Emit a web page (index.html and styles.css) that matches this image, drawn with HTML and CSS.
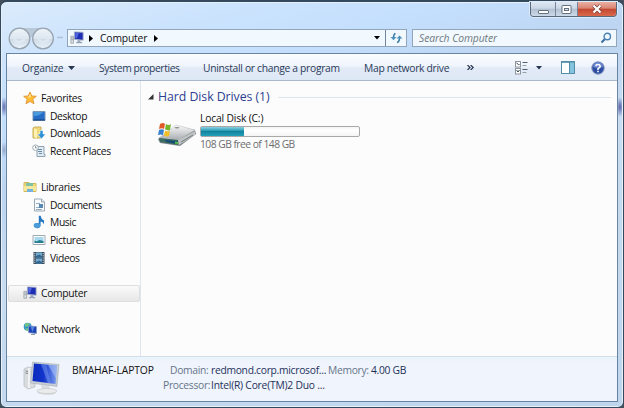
FILE: index.html
```html
<!DOCTYPE html>
<html lang="en">
<head>
  <meta charset="UTF-8" />
  <meta name="viewport" content="width=device-width, initial-scale=1" />
  <title>Computer</title>
  <link rel="stylesheet" href="styles.css">
</head>

<body>

  <!-- Shared icons -->
  <svg class="defs" width="0" height="0">
    <symbol id="icon-pc" viewBox="0 0 16 16">
      <path d="M1 6h3v8H1z" fill="#dfe3e6" stroke="#8d969d" stroke-width=".8" />
      <path d="M1.5 8h2M1.5 10h2" stroke="#68757d" stroke-width=".6" />
      <path d="M5 1l10 .5v9L5 9.500z" fill="#1c2fb4" stroke="#a9b2c5" />
      <path d="M6 2l4 .3-2 6-2-.2z" fill="#5165df" />
      <path d="M8.500 10.500h3.500v2h2V14H7v-1.500h1.500z" fill="#98a4b8" />
    </symbol>
    <linearGradient id="screen" x1="0" y1="0" x2="1" y2="0">
      <stop offset="0" stop-color="#0a2bbc" />
      <stop offset=".45" stop-color="#1334cb" />
      <stop offset="1" stop-color="#7ca0f0" />
    </linearGradient>
    <linearGradient id="metal" x1="0" y1="0" x2="0" y2="1">
      <stop offset="0" stop-color="#fafafa" />
      <stop offset="1" stop-color="#a9adb0" />
    </linearGradient>
  </svg>

  <div class="window">

    <!-- Title bar -->
    <header class="titlebar">
      <div class="controls">
        <span class="control minimize">
          <svg width="11" height="9" viewBox="0 0 11 9"><rect x=".5" y="5.500" width="10" height="3" rx=".5" fill="#fff" stroke="#63707f" /></svg>
        </span>
        <span class="control">
          <svg width="11" height="9" viewBox="0 0 11 9"><rect x="1" y=".5" width="9" height="8" rx=".5" fill="#fff" stroke="#63707f" /><rect x="3.500" y="3.500" width="4" height="2" fill="#dce6f1" stroke="#63707f" /></svg>
        </span>
        <span class="control close">
          <svg width="12" height="10" viewBox="0 0 12 10"><path d="M2.500 1.500l7 7M9.500 1.500l-7 7" stroke="#7d3c38" stroke-width="3.800" /><path d="M2.500 1.500l7 7M9.500 1.500l-7 7" stroke="#fff" stroke-width="2.300" /></svg>
        </span>
      </div>
    </header>

    <!-- Address and search -->
    <div class="navbar">
      <svg class="travel" width="57" height="24" viewBox="0 0 57 24">
        <defs>
          <linearGradient id="orb" x1="0" y1="0" x2="0" y2="1">
            <stop offset="0" stop-color="#eef4f9" />
            <stop offset=".5" stop-color="#dde7f0" />
            <stop offset=".55" stop-color="#cfdbe6" />
            <stop offset="1" stop-color="#e9f3fb" />
          </linearGradient>
        </defs>
        <path d="M11 1h24q-8 3-12 10Q19 4 11 1z" fill="#b9c9d8" />
        <circle cx="11.500" cy="11.500" r="10.300" fill="url(#orb)" stroke="#97a3af" stroke-width="1.300" />
        <circle cx="35" cy="11.500" r="10.300" fill="url(#orb)" stroke="#97a3af" stroke-width="1.300" />
        <path d="M6 12.500l5 3 6-3M30 12.500l5 3 6-3" fill="none" stroke="#dfe9f1" stroke-width="2" />
        <path d="M49 10.500h6" fill="none" stroke="#afc1d2" stroke-width="1.500" />
      </svg>
      <div class="address">
        <svg width="14" height="14"><use href="#icon-pc" /></svg>
        <svg class="crumb" width="4" height="7" viewBox="0 0 4 7"><path d="M0 0l4 3.500L0 7z" /></svg>
        <span class="place">Computer</span>
        <svg class="crumb" width="4" height="7" viewBox="0 0 4 7"><path d="M0 0l4 3.500L0 7z" /></svg>
        <svg class="history" width="6" height="4" viewBox="0 0 6 4"><path d="M0 0h6L3 3.500z" /></svg>
        <span class="refresh">
          <svg width="13" height="12" viewBox="0 0 13 12" fill="none" stroke="#3c80a8" stroke-width="1.600">
            <path d="M5.500 1.500Q3.500 2 3.500 6" /><path d="M7 10.500q2.500-.5 2.500-5" />
            <path d="M.5 5h6L3.500 8.200z M6.500 6.500h6L9.500 3.500z" fill="#4a91bb" stroke="none" />
          </svg>
        </span>
      </div>
      <div class="search">
        <span>Search Computer</span>
        <svg width="12" height="12" viewBox="0 0 12 12" fill="none">
          <path d="M5.200 6.800L1.500 10.500" stroke="#3d6f9c" stroke-width="2" />
          <circle cx="7.300" cy="4.500" r="3.200" fill="#eef8ff" stroke="#4c83b4" stroke-width="1.400" />
        </svg>
      </div>
    </div>

    <div class="client">

      <!-- Command bar -->
      <div class="toolbar">
        <span class="organize">Organize <svg width="7" height="4" viewBox="0 0 7 4"><path d="M0 0h7L3.500 4z" fill="#253650" /></svg></span>
        <span class="properties">System properties</span>
        <span class="uninstall">Uninstall or change a program</span>
        <span class="map">Map network drive</span>
        <svg class="more" width="7" height="5" viewBox="0 0 7 5" fill="none" stroke="#253650" stroke-width="1.200"><path d="M.5 0L3 2.500.5 5M3.700 0l2.500 2.500L3.700 5" /></svg>
        <svg class="view" width="15" height="14" viewBox="0 0 15 14">
          <rect x="1.500" y=".5" width="5" height="5.500" fill="#fff" stroke="#8c959d" />
          <rect x="1.500" y="7.500" width="5" height="5.500" fill="#fff" stroke="#8c959d" />
          <path d="M2.500 2l2 1.500h1M2.500 9l1.500 2 1.500-2" fill="none" stroke="#34424d" />
          <path d="M8.500 1.500h5M8.500 8.500h5" stroke="#4e6170" /><path d="M8.500 4.500h4M8.500 11.500h4" stroke="#93a0ab" />
        </svg>
        <svg class="view-arrow" width="6" height="4" viewBox="0 0 6 4"><path d="M0 0h6L3 3.500z" fill="#253650" /></svg>
        <svg class="preview" width="14" height="13" viewBox="0 0 14 13">
          <rect x=".5" y=".5" width="13" height="12" fill="#fff" stroke="#548da7" />
          <path d="M9 1h4v11H9z" fill="#83c4de" /><path d="M1 1.500h12" stroke="#6ba2b9" /><path d="M8.500 1v11" stroke="#548da7" />
        </svg>
        <svg class="help" width="14" height="14" viewBox="0 0 14 14">
          <circle cx="7" cy="7" r="6.200" fill="#2d4da3" stroke="#8997bf" />
          <path d="M2 6a5 5 0 0 1 10 0Q7 8 2 6z" fill="#6a87cc" />
          <path d="M4.800 5.200Q5 3.500 7 3.500t2.200 1.700Q9.200 6.500 7 7.600V9" fill="none" stroke="#fff" stroke-width="1.500" /><path d="M6.200 9.800h1.600v1.500H6.200z" fill="#fff" />
        </svg>
      </div>

      <div class="main">

        <!-- Navigation pane -->
        <nav class="sidebar">
          <div class="group">
            <div class="item head">
              <svg width="14" height="14" viewBox="0 0 14 14"><path d="M7 1l1.700 4 4.600.3-3.500 3 1.200 4.400L7 10.400l-4 2.300 1.200-4.400-3.500-3L5.300 5z" fill="#ffbd35" stroke="#e09a3b" /><path d="M7 2.500l1 3.300-3 1.500z" fill="#ffe790" /></svg>
              <span>Favorites</span>
            </div>
            <div class="item">
              <svg width="14" height="14" viewBox="0 0 14 14"><path d="M1 2.500h12v9H1z" fill="#246cc5" stroke="#7896b7" /><path d="M2 3h9Q8 7 2 7z" fill="#4999df" /><path d="M1 11h12" stroke="#173f78" /></svg>
              <span>Desktop</span>
            </div>
            <div class="item">
              <svg width="14" height="14" viewBox="0 0 14 14"><path d="M1 2l2-1h6v11H1z" fill="#edd779" stroke="#c9ac58" /><path d="M2 2.500l3 1v9L2 11z" fill="#fff2af" /><path d="M8 4.500h3V8h2.500l-4 5-4-5H8z" fill="#2c91d6" stroke="#fff" stroke-width=".5" /></svg>
              <span>Downloads</span>
            </div>
            <div class="item">
              <svg width="14" height="14" viewBox="0 0 14 14"><path d="M4 2.500h8v8h1v2H5V5z" fill="#e2ebf1" stroke="#8fa2b0" /><path d="M6 5.500h4M6 7.500h4M7 9.500h3" stroke="#6c8da6" /><circle cx="3.500" cy="3.700" r="2.800" fill="#fff" stroke="#9eabb4" /><path d="M3.500 2v2H5" fill="none" stroke="#647785" stroke-width=".7" /></svg>
              <span>Recent Places</span>
            </div>
          </div>

          <div class="group">
            <div class="item head">
              <svg width="14" height="14" viewBox="0 0 14 14"><path d="M1 2.500h5l1 1h6v8H1z" fill="#f3db78" stroke="#d1b55b" /><path d="M3 3h7v3H3z" fill="#7fc1a5" /><path d="M1 6h12v5H1z" fill="#f7e798" /><path d="M4 9h6v3H4z" fill="#73b2df" /></svg>
              <span>Libraries</span>
            </div>
            <div class="item">
              <svg width="14" height="14" viewBox="0 0 14 14"><path d="M2.500 1h7l3 3v9h-10z" fill="#f9fbfd" stroke="#9ba9b5" /><path d="M9.500 1v3h3" fill="#dce5ec" stroke="#9ba9b5" /><path d="M4 5.500h4M4 9.500h3M4 11.500h6" stroke="#91adc5" /><path d="M7 6h4v4H7z" fill="#5789b2" /></svg>
              <span>Documents</span>
            </div>
            <div class="item">
              <svg width="14" height="14" viewBox="0 0 14 14"><path d="M6.800.7h1.800Q9 4 12 5.500v3.700Q11 6.800 8.600 6.500v4a3.300 2.600 0 1 1-1.800-2.200z" fill="#2478c0" /><ellipse cx="4.900" cy="10.500" rx="3.200" ry="2.400" fill="#4a9dd9" /></svg>
              <span>Music</span>
            </div>
            <div class="item">
              <svg width="14" height="14" viewBox="0 0 14 14"><path d="M1 2.500h12v9H1z" fill="#fff" stroke="#9da9b2" /><path d="M2.500 4h9v6h-9z" fill="#a6d9ed" /><path d="M2.500 7.500l2 1 3-1.500 4 1v2h-9z" fill="#277d91" /></svg>
              <span>Pictures</span>
            </div>
            <div class="item">
              <svg width="14" height="14" viewBox="0 0 14 14"><path d="M1.500 1h11v12h-11z" fill="#354b5c" /><path d="M4 1.500h6v5H4zM4 7.500h6v5H4z" fill="#76abd2" /><path d="M4 5l3-1.500L10 5v1.500H4zM4 11l3-1.500 3 1.500v1.500H4z" fill="#316790" /><path d="M2.800 2v10.500M11.200 2v10.500" stroke="#d6e0e7" stroke-dasharray="1.200 1" /></svg>
              <span>Videos</span>
            </div>
          </div>

          <div class="group">
            <div class="item head selected">
              <svg width="14" height="14"><use href="#icon-pc" /></svg>
              <span>Computer</span>
            </div>
          </div>

          <div class="group">
            <div class="item head">
              <svg width="14" height="14" viewBox="0 0 14 14"><circle cx="4.700" cy="4.800" r="4" fill="#3198c5" /><path d="M2 2q3-2 5 0L5 4 2 5zM2 7l3-1 1 2-2 1z" fill="#76c482" /><path d="M5.500 4l8 .5v7l-8-.8z" fill="#1c42b8" stroke="#8ca1c4" stroke-width=".8" /><path d="M7.500 4.500l4 .3-2 5.500z" fill="#5786e0" /><path d="M8 12.500h4" stroke="#8f9aa4" /></svg>
              <span>Network</span>
            </div>
          </div>
        </nav>

        <!-- Drives -->
        <section class="content">
          <div class="section-title">
            <svg width="6" height="6" viewBox="0 0 6 6"><path d="M5.500 0v5.500H0z" fill="#333" /></svg>
            <h1>Hard Disk Drives (1)</h1>
            <span class="rule"></span>
          </div>
          <div class="drive">
            <svg width="40" height="25" viewBox="0 0 40 25">
              <path d="M1 17L19 4l19 4 1 4-16 12L3 21z" fill="#7d8488" />
              <path d="M2 16L19 3l19 5-17 10z" fill="url(#metal)" stroke="#b7babb" stroke-width=".5" />
              <path d="M2 16l19 2v5L3 20z" fill="#3c6c63" />
              <path d="M8 18l13 1v3L9 20z" fill="#164b78" />
              <path d="M21 18l17-9v4L22 23z" fill="#bfc3c4" />
              <path d="M24 20l12-7" stroke="#737a7e" />
              <path d="M18 19.500l3 .4v2l-3-.4z" fill="#53c444" />
              <ellipse cx="20" cy="5.800" rx="2.500" ry=".8" fill="#888" />
              <path d="M3 2q3-2 5 0L7 7Q5 5.500 2 7z" fill="#e45a27" />
              <path d="M9 2q3 2 5 0l-1 6q-3 1-5-.7z" fill="#78b52a" />
              <path d="M2 8q3-1.500 5 0l-1 5Q4 12 1 13z" fill="#3881cf" />
              <path d="M8 8.500q3 1.500 5 .5l-1 5q-3 1-5-.5z" fill="#f3be25" />
            </svg>
            <div class="drive-info">
              <div class="drive-name">Local Disk (C:)</div>
              <div class="bar"><div class="fill" style="width: 27.500%"></div></div>
              <div class="free">108 GB free of 148 GB</div>
            </div>
          </div>
        </section>
      </div>

      <!-- Details pane -->
      <footer class="details">
        <svg width="38" height="34" viewBox="0 0 38 34">
          <path d="M1 8l4-2 7 1v19l-7 2-4-3z" fill="#d8dcdf" stroke="#b0b5b9" stroke-width=".6" />
          <path d="M2.500 10l3 .5M2.500 12l3 .5" stroke="#7f878c" /><path d="M6 7v20" stroke="#f8f9fa" stroke-width="1.500" />
          <path d="M18 24l8 1 1 3q6 1 6 3 0 3-8 3-11-1-11-3 0-2 5-3z" fill="#d9dcde" />
          <ellipse cx="24" cy="30" rx="10" ry="2.500" fill="#e9ebec" stroke="#b9bec2" stroke-width=".5" />
          <path d="M9.500 1L36 3.500l-2 22L7.500 22z" fill="#c6cdd4" stroke="#9ba4ad" stroke-width=".5" />
          <path d="M11 2.500l23 2-1.500 18.500L9.500 20z" fill="url(#screen)" />
          <path d="M18 3.200l5 .4 5 18.800-3-.3z" fill="#7194ef" opacity=".55" />
          <path d="M25 3.700l9 .8-1 13z" fill="#b3c9fa" opacity=".5" />
        </svg>
        <div class="device">BMAHAF-LAPTOP</div>
        <dl>
          <dt class="domain">Domain:</dt><dd class="domain-value">redmond.corp.microsof...</dd>
          <dt class="memory">Memory:</dt><dd class="memory-value">4.00 GB</dd>
          <dt>Processor:</dt><dd class="cpu-value">Intel(R) Core(TM)2 Duo ...</dd>
        </dl>
      </footer>
    </div>
  </div>

</body>
</html>
```

FILE: styles.css
```css
* {
  box-sizing: border-box;
}

body {
  margin: 0;
  width: 624px;
  height: 408px;
  overflow: hidden;
  background: #45505d;
  color: #111;
  font-family: "Open Sans", "Noto Sans", sans-serif;
  font-size: 10.3px;
  line-height: 14px;
  letter-spacing: -.3px;
}

svg {
  display: block;
  flex: none;
}

.defs {
  position: absolute;
}

.window {
  display: flex;
  flex-direction: column;
  height: 408px;
  padding: 0 5px 5px 4px;
  border: 1px solid #34495b;
  border-width: 2px 1px 1px;
  border-radius: 7px 7px 6px 6px;
  background:
    radial-gradient(4px 10px at 3px 105px, #6670b0, transparent),
    radial-gradient(4px 8px at 3px 148px, #98a9cb, transparent),
    radial-gradient(4px 10px at 619px 105px, #5a62a8, transparent),
    linear-gradient(165deg, #dbebfb 0, #cbe3fd 12%, #c4dffd 22%, #bdd5f1 33%, #c9dcf0 50%, #bfd5ec 100%);
  box-shadow: inset 0 0 0 1px #e5f2fd;
}

/* Title bar */
.titlebar {
  display: flex;
  justify-content: flex-end;
  flex: none;
  height: 24px;
}

.controls {
  display: flex;
  height: 15px;
  margin-right: 1px;
  border: 1px solid #59687a;
  border-top: 0;
  border-radius: 0 0 4px 4px;
  overflow: hidden;
  box-shadow: 0 0 0 1px #dcebf9;
}

.control {
  display: flex;
  align-items: center;
  justify-content: center;
  width: 22px;
  border-right: 1px solid #77869a;
  background: linear-gradient(#dfe8f3 0, #cbd7e6 45%, #b2c0d1 50%, #cbd9e9 100%);
}

.minimize {
  width: 25px;
}

.close {
  width: 38px;
  border: 0;
  background: linear-gradient(#eab0a3 0, #d98472 45%, #c34730 50%, #d9694c 100%);
}

/* Address and search */
.navbar {
  display: flex;
  flex: none;
  height: 27px;
  padding: 1px 1px 0 3px;
}

.travel {
  margin-right: 2px;
}

.address,
.search {
  display: flex;
  align-items: center;
  height: 18px;
  margin-top: 2px;
  border: 1px solid #91a5bb;
  background: #f1f8fe;
}

.address {
  width: 340px;
  padding-left: 2px;
}

.crumb {
  margin-left: 5px;
}

.place {
  margin: 0 8px 0 7px;
  width: 46px;
  white-space: nowrap;
  letter-spacing: -.15px;
}

.address .place + .crumb {
  margin-left: 0;
}

.history {
  margin-left: auto;
  margin-right: 5px;
}

.refresh {
  display: flex;
  align-items: center;
  justify-content: center;
  width: 21px;
  height: 100%;
  border-left: 1px solid #71879f;
}

.search {
  justify-content: space-between;
  width: 205px;
  margin-left: 5px;
  padding: 0 4px 0 6px;
  color: #6e7880;
  font-style: italic;
  letter-spacing: -.05px;
}

.client {
  display: flex;
  flex-direction: column;
  flex: 1;
  min-height: 0;
  border: 1px solid #6784a3;
  margin-left: 1px;
  background: #fcfcfd;
}

/* Command bar */
.toolbar {
  display: flex;
  align-items: center;
  flex: none;
  height: 27px;
  padding: 1px 0 0 15px;
  border-bottom: 1px solid #a9b8ca;
  background: linear-gradient(#fbfdff 0, #f0f5fc 45%, #e2eaf6 55%, #dde8f6 100%);
  color: #2b3a59;
  white-space: nowrap;
}

.organize {
  display: flex;
  align-items: center;
  gap: 5px;
  width: 77px;
  letter-spacing: -.2px;
}

.properties {
  width: 104px;
  letter-spacing: -.4px;
}

.uninstall {
  width: 161px;
}

.map {
  width: 103px;
}

.view {
  margin-left: 40px;
}

.view-arrow {
  margin-left: 7px;
}

.preview {
  margin-left: 19px;
}

.help {
  margin-left: 16px;
}

.main {
  display: flex;
  flex: 1;
  min-height: 0;
}

/* Navigation pane */
.sidebar {
  width: 134px;
  padding-top: 8px;
  border-right: 1px solid #dce6f2;
}

.group {
  margin-bottom: 17.7px;
}

.item {
  display: flex;
  align-items: center;
  height: 17.8px;
  padding-left: 25px;
  gap: 4px;
  white-space: nowrap;
  letter-spacing: -.38px;
}

.item.head {
  padding-left: 16px;
  letter-spacing: -.3px;
}

.item.selected {
  margin: 0 0 0 1px;
  padding-left: 14px;
  border: 1px solid #dedede;
  border-radius: 2px;
  background: linear-gradient(#fafafa, #e7e7e7);
}

/* Drives */
.content {
  flex: 1;
  padding: 8px 6px 0 7px;
}

.section-title {
  display: flex;
  align-items: center;
  height: 16px;
}

.section-title h1 {
  margin: 0 8px 0 4px;
  color: #2c3e91;
  font-size: 12.3px;
  font-weight: normal;
  letter-spacing: -.05px;
  white-space: nowrap;
}

.rule {
  flex: 1;
  border-top: 1px solid #dfe4eb;
}

.drive {
  display: flex;
  padding: 6px 0 0 9px;
  gap: 3px;
}

.drive > svg {
  margin-top: 11px;
}

.drive-name {
  white-space: nowrap;
  letter-spacing: -.17px;
}

.bar {
  width: 160px;
  height: 11px;
  margin: 1px 0 0;
  border: 1px solid #a8a8a8;
  border-radius: 2px;
  background: linear-gradient(#f5f5f5, #fff 40%, #f4f4f4);
}

.fill {
  height: 100%;
  background: linear-gradient(#8bd0df 0, #3aa7bf 35%, #14849e 50%, #24a0b9 100%);
}

.free {
  color: #6d6d6d;
  letter-spacing: -.53px;
}

/* Details pane */
.details {
  display: flex;
  flex: none;
  height: 45px;
  padding: 4px 0 0 16px;
  border-top: 1px solid #d3deeb;
  background: #f0f4fc;
  box-shadow: inset 0 3px 3px #eaf4fc;
}

.device {
  width: 91px;
  margin: 2px 0 0 11px;
  letter-spacing: -.1px;
  white-space: nowrap;
}

dl {
  display: grid;
  grid-template-columns: 48px 117px 43px 50px;
  align-content: start;
  row-gap: 1px;
  margin: 2px 0 0;
  white-space: nowrap;
}

dt {
  color: #65758a;
}

dd {
  margin: 0;
  color: #1e325b;
}

.domain {
  padding-left: 7px;
}

.domain-value {
  letter-spacing: -.28px;
}

.cpu-value {
  letter-spacing: -.22px;
}
```
